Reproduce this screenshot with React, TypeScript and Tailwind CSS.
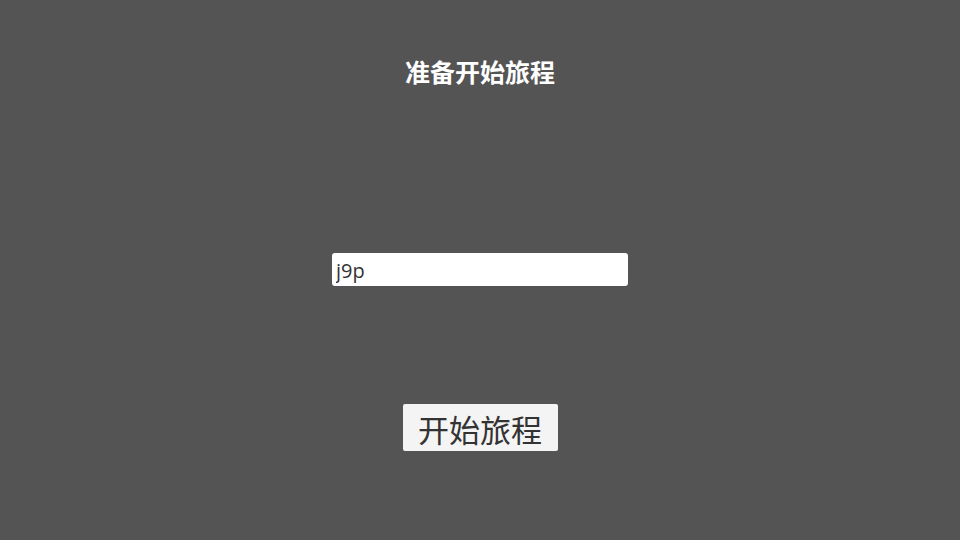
import React from "react";

export default function App() {
  return (
    <div
      className="w-[960px] h-[540px] bg-[#545454] flex flex-col items-center"
      style={{ fontFamily: '"Noto Sans", "Noto Sans CJK SC", sans-serif' }}
    >
      <div className="mt-[56px] h-[32px] leading-[32px] text-[25px] font-bold text-white">
        准备开始旅程
      </div>
      <input
        defaultValue="j9p"
        className="mt-[165px] w-[296px] h-[33px] bg-white rounded-[3px] pl-[4px] pt-[1px] text-[20px] text-[#333] outline-none"
        style={{ fontFamily: '"Open Sans", "Noto Sans CJK SC", sans-serif' }}
      />
      <button className="mt-[118px] w-[155px] h-[47px] bg-[#f4f4f4] rounded-[2px] text-[31px] leading-[40px] pt-[5px] text-[#333] flex items-center justify-center">
        开始旅程
      </button>
    </div>
  );
}
